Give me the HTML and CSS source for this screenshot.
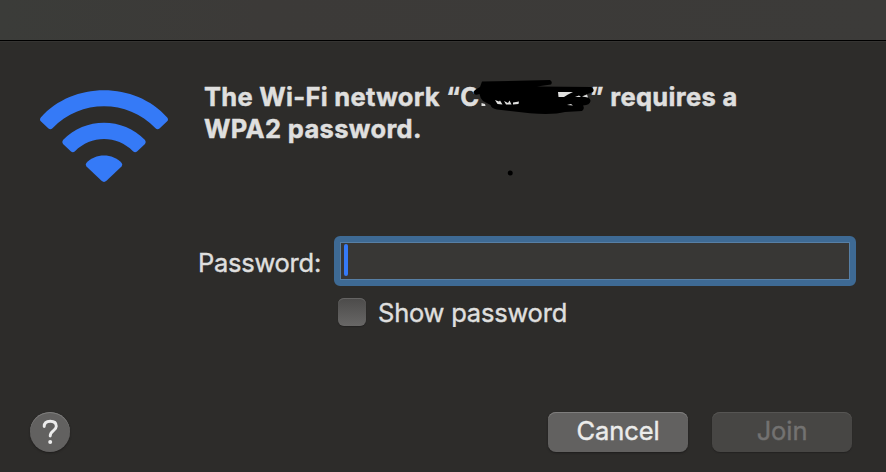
FILE: index.html
```html
<!DOCTYPE html>
<html lang="en">
<head>
<meta charset="utf-8">
<title>Wi-Fi password</title>
<link rel="stylesheet" href="styles.css">
</head>
<body>
<div class="titlebar"></div>
<main class="dialog">
  <header class="intro">
    <svg class="wifi" width="130" height="94" viewBox="0 0 130 94">
      <path d="M1.8 27.5C34-8.8 96-8.8 128.2 27.5Q129.8 29.5 128.2 31.3L120.5 38.5Q118.5 40 116.5 38.3C88 9 42 9 13.500 38.3Q11.500 40 9.500 38.500L1.8 31.3Q.2 29.5 1.8 27.500Z"/>
      <path d="M24 50C46 27 84 27 106 50Q107.500 52 106 54L98 61.500Q96 63 94 61.300C78 45 52 45 36 61.300Q34 63 32 61.500L24 54Q22.500 52 24 50Z"/>
      <path d="M47.300 73C56 63 74 63 82.700 73Q84 74.800 82.500 76.500L67.500 90.800Q65 93 62.500 90.800L47.500 76.500Q46 74.800 47.300 73Z"/>
    </svg>
    <h1 class="title"><span class="lead">The Wi-Fi network “C</span><span class="redacted"><svg class="scribble" width="134" height="110" viewBox="0 0 134 110">
      <path d="M12 11.500L80 10Q83 12 81 14.500L67 16.500L121 17Q125 19 123 22L113 25.500Q121 28 120.500 31Q120 35 113 35.500Q115 39 112 41L95 42Q84 45 60 43.300L27 39.500Q21 38 20.500 35L13 31Q10 28 9.500 24Q4 26 3.500 22Q4 20 10 17Z"/>
      <path class="trace" d="M11.500 33L15 34L15.500 36L11.500 36ZM25 30L29 31.500L30 30.500L32.500 34.500L27.500 34ZM34 31L38 33L39.500 30.500L41.500 34.500L36 34.500ZM43 32.500L49 31.500L48.500 34L43 34.500ZM88 22L103 22L98 24.500L94 27L88.500 27ZM105 27L109 25.500L111 27ZM112 26.500L117 24.500L118 27.500ZM97 35L101 34L103 35.500Z"/>
      <circle cx="40.200" cy="103" r="2.500"/>
    </svg></span><span class="tail">” requires a</span><br><span class="second">WPA2 password.</span></h1>
  </header>
  <form class="form">
    <label class="label" for="password">Password:</label>
    <div class="field" id="password"><span class="caret"></span></div>
    <div class="option"><span class="checkbox"></span><span class="option-text">Show password</span></div>
  </form>
  <footer class="actions">
    <div class="help"><svg width="20" height="28" viewBox="0 0 20 28"><path d="M4.200 8.500C4.200 5 6.500 3.200 10.200 3.200C14 3.200 16.300 5.200 16.300 8.200C16.300 12.800 10.200 12.500 10.200 18"/><circle cx="10.200" cy="24" r="2"/></svg></div>
    <div class="button cancel"><span>Cancel</span></div>
    <div class="button join"><span>Join</span></div>
  </footer>
</main>
</body>
</html>
```

FILE: styles.css
```css
* { box-sizing: border-box; }
body {
  margin: 0;
  width: 886px;
  height: 472px;
  overflow: hidden;
  background: #2d2c2a;
  color: #dfdfde;
  font: 25.5px/32px Inter, sans-serif;
}
.titlebar {
  height: 41px;
  background: linear-gradient(90deg, #3b3c39, #3c3a38 30%, #3c3b39);
  border-bottom: 1px solid #000;
}
.dialog { height: 431px; border-top: 1px solid #353432; }
.intro { display: flex; padding: 48px 0 0 39px; height: 194px; }
.wifi { flex: none; fill: #357af7; }
.title {
  margin: -9px 0 0 35px;
  font-size: 25.5px;
  line-height: 32px;
  font-weight: 700;
  white-space: nowrap;
  -webkit-text-stroke: .5px;
}
.lead, .tail, .second { display: inline-block; }
.lead { width: 276px; letter-spacing: .3px; }
.tail { letter-spacing: .35px; }
.second { letter-spacing: .35px; }
.redacted { display: inline-block; position: relative; width: 110px; height: 20px; }
.scribble { position: absolute; left: -10px; top: -16px; fill: #000; }
.trace { fill: #dfdfde; }
.form {
  display: grid;
  grid-template-columns: 321px 522px;
  column-gap: 13px;
  row-gap: 10px;
}
.label { text-align: right; padding-top: 11px; letter-spacing: -.25px; -webkit-text-stroke: .4px; }
.field {
  height: 50px;
  border: 6px solid #3e6a94;
  border-radius: 6px;
  padding: 2px 0 0 4px;
  background: #383735;
  box-shadow: inset 0 0 0 1px #577fa5;
}
.caret { display: block; width: 4px; height: 32px; border-radius: 2px; background: #357af7; }
.option { grid-column: 2; display: flex; align-items: center; height: 32px; padding-left: 4px; }
.checkbox {
  width: 28px;
  height: 28px;
  margin-right: 12px;
  border-radius: 6px;
  background: linear-gradient(#4c4b4a, #686766);
  box-shadow: inset 0 1px #656463, 0 1px 1px #242322;
}
.option-text { padding-top: 2px; letter-spacing: -.22px; -webkit-text-stroke: .4px; }
.actions { display: flex; margin: 84px 34px 0 30px; }
.help, .button {
  height: 40px;
  display: flex;
  align-items: center;
  justify-content: center;
  background: #626160;
  box-shadow: inset 0 1px #7f7e7d, 0 1px 2px #1e1d1c;
}
.help { width: 40px; border-radius: 50%; margin-right: auto; }
.help path { fill: none; stroke: #ececec; stroke-width: 2.900; stroke-linecap: round; }
.help circle { fill: #ececec; }
.button { width: 140px; border-radius: 8px; padding-bottom: 2px; color: #ececeb; letter-spacing: -.1px; -webkit-text-stroke: .4px; }
.cancel { margin-right: 24px; }
.join { background: #474644; color: #737271; box-shadow: inset 0 1px #565553, 0 1px 1px #242322; }
```
